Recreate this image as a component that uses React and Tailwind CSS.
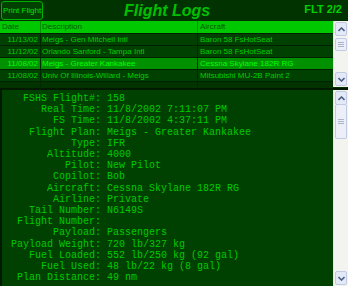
import React from 'react';

const rows = [
  { date: '11/13/02', desc: 'Meigs - Gen Mitchell Intl', craft: 'Baron 58 FsHotSeat' },
  { date: '11/12/02', desc: 'Orlando Sanford - Tampa Intl', craft: 'Baron 58 FsHotSeat' },
  { date: '11/08/02', desc: 'Meigs - Greater Kankakee', craft: 'Cessna Skylane 182R RG', sel: true },
  { date: '11/08/02', desc: 'Univ Of Illinois-Willard - Meigs', craft: 'Mitsubishi MU-2B Paint 2' },
];

const details = [
  ['FSHS Flight#', '158'],
  ['Real Time', '11/8/2002 7:11:07 PM'],
  ['FS Time', '11/8/2002 4:37:11 PM'],
  ['Flight Plan', 'Meigs - Greater Kankakee'],
  ['Type', 'IFR'],
  ['Altitude', '4000'],
  ['Pilot', 'New Pilot'],
  ['Copilot', 'Bob'],
  ['Aircraft', 'Cessna Skylane 182R RG'],
  ['Airline', 'Private'],
  ['Tail Number', 'N6149S'],
  ['Flight Number', ''],
  ['Payload', 'Passengers'],
  ['Payload Weight', '720 lb/327 kg'],
  ['Fuel Loaded', '552 lb/250 kg (92 gal)'],
  ['Fuel Used', '48 lb/22 kg (8 gal)'],
  ['Plan Distance', '49 nm'],
];

function Arrow({ up }) {
  return (
    <svg width="7" height="5" viewBox="0 0 7 5">
      <path d={up ? 'M0.5 4L3.5 1L6.5 4' : 'M0.5 1L3.5 4L6.5 1'} fill="none" stroke="#4d6185" strokeWidth="1.6" />
    </svg>
  );
}

function ScrollBar({ thumbTop, thumbH }) {
  return (
    <div className="w-[15px] h-full bg-[#f3f3ef] flex flex-col border-l border-[#e6e6e0] relative">
      <div className="h-[14px] mx-[1px] mt-[1px] rounded-[2px] bg-[#e4e9f7] border border-[#c0cae3] flex items-center justify-center">
        <Arrow up />
      </div>
      <div className="flex-1" />
      <div className="h-[14px] mx-[1px] mb-[1px] rounded-[2px] bg-[#e4e9f7] border border-[#c0cae3] flex items-center justify-center">
        <Arrow />
      </div>
      <div
        className="absolute left-[1px] right-[1px] rounded-[2px] bg-[#eceff8] border border-[#c0cae3] flex flex-col items-center justify-center gap-[1px]"
        style={{ top: thumbTop, height: thumbH }}
      >
        <div className="w-[6px] h-[1px] bg-[#aab4cc]" />
        <div className="w-[6px] h-[1px] bg-[#aab4cc]" />
        <div className="w-[6px] h-[1px] bg-[#aab4cc]" />
      </div>
    </div>
  );
}

export default function App() {
  return (
    <div className="w-[348px] h-[286px] bg-[#003300] overflow-hidden flex flex-col font-['Liberation_Sans',Arial,sans-serif]">
      {/* top bar */}
      <div className="h-[21px] flex items-center shrink-0">
        <div className="ml-[1px] w-[42px] h-[19px] rounded-[3px] border border-[#00b000] bg-[#004000] text-[#00e000] text-[8px] flex items-center justify-center">
          Print Flight
        </div>
        <div className="ml-[81px] text-[#00c000] text-[16px] font-bold italic leading-none">Flight Logs</div>
        <div className="ml-auto mr-[6px] text-[#00d000] text-[11px] font-bold leading-none mb-[3px]">FLT 2/2</div>
      </div>

      {/* list */}
      <div className="h-[66px] flex shrink-0 text-[8px] leading-none">
        <div className="flex-1 flex flex-col overflow-hidden">
          <div className="h-[12px] bg-[#00c800] flex text-[#005800] items-center shrink-0">
            <div className="w-[41px] pl-[2px] border-r border-[#009000] h-full flex items-center">Date</div>
            <div className="w-[157px] pl-[1px] border-r border-[#009000] h-full flex items-center">Description</div>
            <div className="flex-1 pl-[2px]">Aircraft</div>
          </div>
          {rows.map((r, i) => (
            <div
              key={i}
              className={
                'h-[12px] flex items-center shrink-0 border-t border-[#002000] ' +
                (r.sel ? 'bg-[#009000] text-[#00ff00]' : 'bg-[#004000] text-[#00cc00]')
              }
            >
              <div className="w-[41px] pr-[2px] text-right border-r border-[#002800] h-full flex items-center justify-end">{r.date}</div>
              <div className="w-[157px] pl-[1px] border-r border-[#002800] h-full flex items-center">{r.desc}</div>
              <div className="flex-1 pl-[2px]">{r.craft}</div>
            </div>
          ))}
          <div className="h-[6px] bg-[#003300] border-t border-[#002000] flex shrink-0">
            <div className="w-[41px] border-r border-[#002800]" />
            <div className="w-[157px] border-r border-[#002800]" />
          </div>
        </div>
        <ScrollBar thumbTop={17} thumbH={13} />
      </div>

      {/* detail */}
      <div className="mt-[1px] h-[198px] flex border-t-2 border-l-2 border-[#001a00] shrink-0">
        <div className="flex-1 bg-[#004000] pt-[3px] font-['Liberation_Mono','Courier_New',monospace] text-[10px] leading-[11.2px] text-[#00c800]">
          {details.map(([k, v]) => (
            <div key={k} className="flex whitespace-pre">
              <div className="w-[99px] text-right">{k}:</div>
              <div className="pl-[6px]">{v}</div>
            </div>
          ))}
        </div>
        <ScrollBar thumbTop={14} thumbH={35} />
      </div>
    </div>
  );
}
